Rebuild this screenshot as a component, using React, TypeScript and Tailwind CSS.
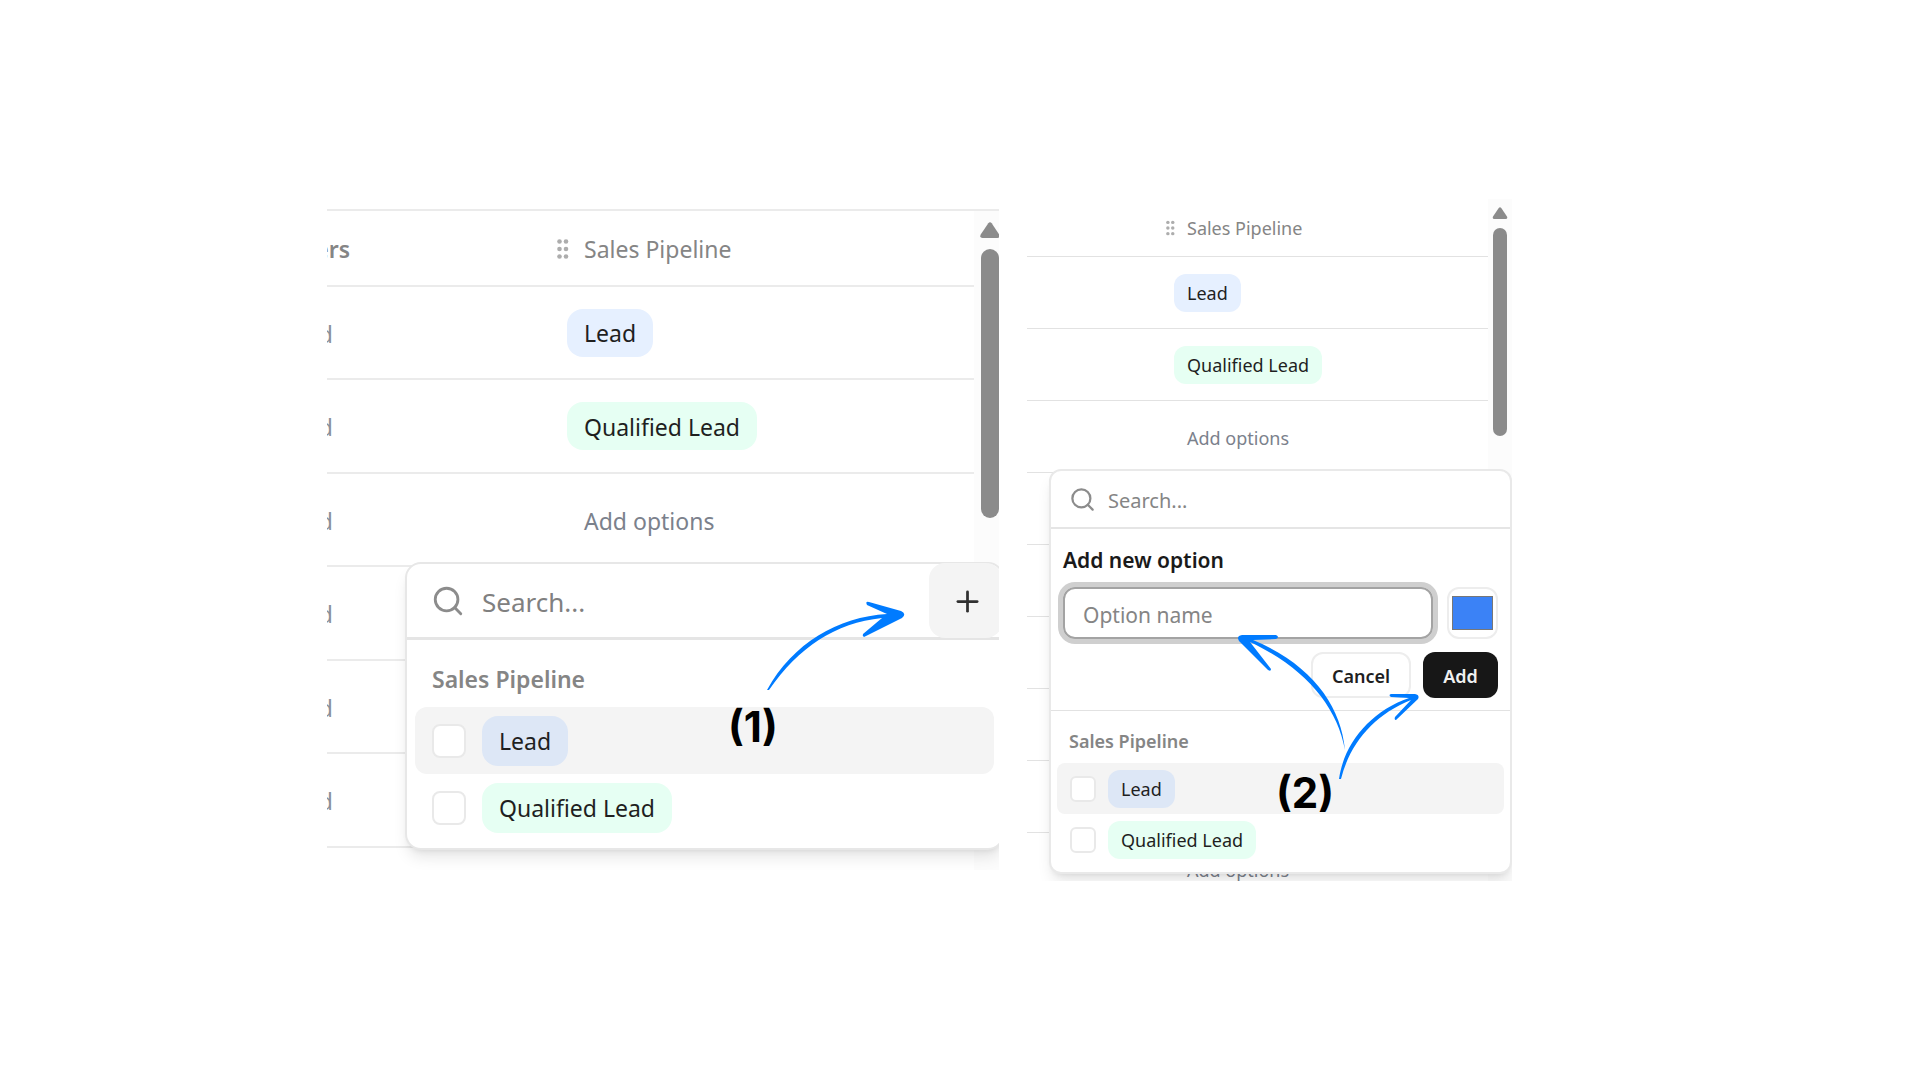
import { Plus, Search } from "lucide-react";

interface Option {
  label: string;
  tagColor: string;
  hoverColor: string;
}

interface TagProps {
  label: string;
  className?: string;
}

interface OptionRowProps {
  id: string;
  option: Option;
  active: boolean;
  large?: boolean;
}

const options: Option[] = [
  { label: "Lead", tagColor: "bg-[#e6f0ff]", hoverColor: "bg-[#dde7f6]" },
  {
    label: "Qualified Lead",
    tagColor: "bg-[#e6fff3]",
    hoverColor: "bg-[#ddf6ea]",
  },
];

const rows = [0, 1, 2, 3, 4, 5];

function Tag({ label, className = "" }: TagProps) {
  return (
    <span
      className={`inline-flex items-center whitespace-nowrap pt-[2px] text-[#1f1f1f] ${className}`}
    >
      {label}
    </span>
  );
}

function Grip({ className = "" }: { className?: string }) {
  return (
    <svg viewBox="0 0 12 20" fill="#adadad" className={className}>
      {[2.5, 10, 17.5].map((y) => (
        <g key={y}>
          <circle cx="2.5" cy={y} r="2.3" />
          <circle cx="9" cy={y} r="2.3" />
        </g>
      ))}
    </svg>
  );
}

function ScrollArrow({ className = "" }: { className?: string }) {
  return (
    <svg viewBox="0 0 20 16" fill="#8b8b8b" className={className}>
      <path d="M8.3 1.2Q10-.8 11.7 1.2L19.3 12.6Q20.6 15.7 17.5 16H2.5Q-.6 15.7.7 12.6Z" />
    </svg>
  );
}

function OptionRow({ id, option, active, large = false }: OptionRowProps) {
  const color = active ? option.hoverColor : option.tagColor;
  return (
    <label
      htmlFor={id}
      className={`flex items-center ${active ? "bg-[#f4f4f4]" : ""} ${
        large ? "h-[67px] gap-4 rounded-xl px-[17px]" : "h-[51px] gap-3 rounded-lg px-[13px]"
      }`}
    >
      <input
        id={id}
        type="checkbox"
        className={`shrink-0 appearance-none border-2 border-[#e9e9e9] bg-white ${
          large ? "size-[34px] rounded-lg" : "size-[26px] rounded-md"
        }`}
      />
      <Tag
        label={option.label}
        className={`${color} ${
          large
            ? "h-[50px] rounded-2xl px-[17px] text-[23px]"
            : "h-[38px] rounded-xl px-[13px] text-[18px]"
        }`}
      />
    </label>
  );
}

function PickOptionFigure() {
  return (
    <section className="relative mt-[10px] h-[661px] overflow-hidden border-t-2 border-[#ebebeb]">
      <div className="flex h-full">
        <table className="h-fit flex-1 border-separate border-spacing-0 text-left text-[23px]">
          <thead>
            <tr className="h-[76px]">
              <th className="w-[230px] border-b-2 border-[#ebebeb] p-0 font-semibold text-[#858585]">
                <div className="flex w-[23px] justify-end overflow-hidden pt-[2px]">
                  ers
                </div>
              </th>
              <th className="border-b-2 border-[#ebebeb] p-0 font-normal text-[#858585]">
                <div className="flex items-center gap-[15px] pt-[2px]">
                  <Grip className="h-5 w-3" />
                  Sales Pipeline
                </div>
              </th>
            </tr>
          </thead>
          <tbody>
            {rows.map((row) => (
              <tr key={row} className="odd:h-[93px] even:h-[94px]">
                <td className="border-b-2 border-[#ebebeb] px-0 pt-[3px] pb-0 text-[#8a8f99]">
                  <div className="flex w-[6px] justify-end overflow-hidden">
                    d
                  </div>
                </td>
                <td className="border-b-2 border-[#ebebeb] py-0 pr-0 pl-[10px] align-middle">
                  {row < 2 && (
                    <Tag
                      label={options[row].label}
                      className={`h-[48px] rounded-2xl px-[17px] align-middle ${options[row].tagColor}`}
                    />
                  )}
                  {row === 2 && (
                    <div className="pt-[3px] pl-[17px] text-[#7b818c]">
                      Add options
                    </div>
                  )}
                </td>
              </tr>
            ))}
          </tbody>
        </table>
        <div className="flex w-[25px] shrink-0 flex-col bg-[#fcfcfc] pt-[11px] pl-[6px]">
          <ScrollArrow className="h-4 w-5 shrink-0" />
          <div className="mt-[11px] ml-px h-[269px] w-[18px] rounded-full bg-[#8b8b8b]" />
        </div>
      </div>

      <div className="absolute top-[351px] -right-[5px] left-[78px] rounded-2xl border-2 border-[#e7e7e7] bg-white shadow-lg">
        <div className="flex h-[76px] items-center border-b-3 border-[#e5e5e5] pl-6">
          <Search className="size-[34px] shrink-0 text-[#8c8c8c]" strokeWidth={2} />
          <input
            type="text"
            aria-label="Search options"
            placeholder="Search..."
            className="ml-[17px] min-w-0 flex-1 pt-1 text-[26px] outline-none placeholder:text-[#808080]"
          />
          <button
            type="button"
            aria-label="Add option"
            className="flex h-[75px] w-[73px] items-center rounded-2xl bg-[#f4f4f4] pt-[2px] pl-[22px]"
          >
            <Plus className="size-[33px] text-[#303030]" strokeWidth={2} />
          </button>
        </div>
        <div className="px-2 pb-[7px]">
          <h2 className="flex h-[67px] items-end pb-3 pl-[17px] text-[23px] leading-8 font-semibold text-[#858585]">
            Sales Pipeline
          </h2>
          {options.map((option, index) => (
            <OptionRow
              key={option.label}
              id={`pick-${index}`}
              option={option}
              active={index === 0}
              large
            />
          ))}
        </div>
      </div>

      <svg
        viewBox="0 0 150 100"
        fill="#007bff"
        className="absolute top-[384px] left-[433px] h-[100px] w-[150px]"
      >
        <path d="M7 95C33 48 78 22 127 19L107 10Q105 6 109 7L141 16Q147 19 142 23L104 42Q102 41 103 39L122 23C75 28 39 52 9 95Z" />
      </svg>
      <span className="absolute top-[490px] left-[401px] font-['Inter',sans-serif] text-[42px] leading-[52px] font-bold text-black">
        (1)
      </span>
    </section>
  );
}

function AddOptionFigure() {
  return (
    <section className="relative h-[682px] overflow-hidden">
      <div className="flex h-full">
        <table className="h-fit flex-1 border-separate border-spacing-0 text-left text-[18px]">
          <thead>
            <tr className="h-[58px]">
              <th className="border-b border-[#e2e2e2] p-0 pl-[139px] font-normal text-[#858585]">
                <div className="flex items-center gap-3 pt-px">
                  <Grip className="h-4 w-[9px]" />
                  Sales Pipeline
                </div>
              </th>
            </tr>
          </thead>
          <tbody>
            {[...rows, 6, 7, 8].map((row) => (
              <tr key={row} className="h-[72px]">
                <td className="border-b border-[#e2e2e2] py-0 pr-0 pl-[147px]">
                  {row < 2 ? (
                    <Tag
                      label={options[row].label}
                      className={`h-[38px] rounded-xl px-[13px] align-middle ${options[row].tagColor}`}
                    />
                  ) : (
                    <div className="pt-[3px] pl-[13px] text-[#7b818c]">
                      Add options
                    </div>
                  )}
                </td>
              </tr>
            ))}
          </tbody>
        </table>
        <div className="flex w-6 shrink-0 flex-col items-center bg-[#fcfcfc] pt-2">
          <ScrollArrow className="h-3 w-4 shrink-0" />
          <div className="mt-[9px] h-[208px] w-[14px] rounded-full bg-[#8b8b8b]" />
        </div>
      </div>

      <div className="absolute top-[270px] right-0 left-[22px] rounded-xl border-2 border-[#e9e9e9] bg-white shadow-lg">
        <div className="flex h-[58px] items-center border-b-2 border-[#e5e5e5] pl-[18px]">
          <Search className="size-[27px] shrink-0 text-[#8c8c8c]" strokeWidth={2} />
          <input
            type="text"
            aria-label="Search options"
            placeholder="Search..."
            className="ml-[12px] min-w-0 flex-1 pt-1 text-[20px] outline-none placeholder:text-[#858585]"
          />
        </div>

        <form className="border-b border-[#e2e2e2] px-3 pt-[15px] pb-3">
          <label
            htmlFor="option-name"
            className="block h-[43px] text-[21px] leading-8 font-semibold text-[#1a1a1a]"
          >
            Add new option
          </label>
          <div className="flex gap-[14px]">
            <input
              id="option-name"
              type="text"
              placeholder="Option name"
              className="h-[52px] min-w-0 flex-1 rounded-xl border-2 border-[#a3a3a3] px-[18px] pt-1 text-[21px] ring-5 ring-[#cfcfcf] outline-none placeholder:text-[#858585]"
            />
            <input
              type="color"
              aria-label="Option color"
              defaultValue="#3b82f6"
              className="h-[52px] w-[51px] rounded-xl border-2 border-[#ededed] px-px py-[3px]"
            />
          </div>
          <div className="mt-[13px] flex justify-end gap-3">
            <button
              type="button"
              className="h-[46px] w-[100px] rounded-xl border-2 border-[#ededed] pt-[2px] text-[18px] font-semibold text-[#1f1f1f]"
            >
              Cancel
            </button>
            <button
              type="button"
              className="h-[46px] w-[75px] rounded-xl bg-[#171717] pt-[2px] text-[18px] font-semibold text-[#f0f0f0]"
            >
              Add
            </button>
          </div>
        </form>

        <div className="px-[6px] pb-[7px]">
          <h2 className="flex h-[52px] items-end pb-2 pl-[12px] text-[18px] leading-7 font-semibold text-[#858585]">
            Sales Pipeline
          </h2>
          {options.map((option, index) => (
            <OptionRow
              key={option.label}
              id={`add-${index}`}
              option={option}
              active={index === 0}
            />
          ))}
        </div>
      </div>

      <svg
        viewBox="0 0 190 150"
        fill="#007bff"
        className="absolute top-[431px] left-[208px] h-[150px] w-[190px]"
      >
        <path d="M110 120C102 76 70 38 15 12L36 39Q36 42 33 40L4 11Q1 6 7 5L41 5Q45 7 41 9L18 10C76 34 106 75 110 120Z" />
        <path d="M104 149C109 113 136 81 174 68L156 67Q153 65 156 64L180 64Q185 65 183 69L161 90Q159 90 160 87L176 70C139 85 115 113 106 149Z" />
      </svg>
      <span className="absolute top-[568px] left-[249px] font-['Inter',sans-serif] text-[42px] leading-[52px] font-bold text-black">
        (2)
      </span>
    </section>
  );
}

export default function App() {
  return (
    <main className="grid min-h-screen grid-cols-[672fr_485fr] items-start gap-7 bg-white pt-[199px] pr-[408px] pl-[327px] font-['Noto_Sans',sans-serif]">
      <PickOptionFigure />
      <AddOptionFigure />
    </main>
  );
}
